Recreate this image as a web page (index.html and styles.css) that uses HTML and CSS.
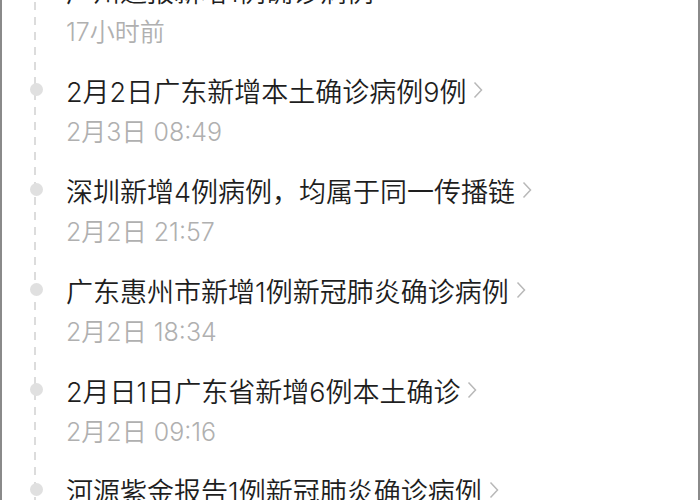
FILE: index.html
```html
<!DOCTYPE html>
<html lang="zh">
<head>
<meta charset="utf-8">
<link rel="stylesheet" href="styles.css">
</head>
<body>
<div class="frame">
  <ul class="timeline">
    <li class="item">
      <span class="dot"></span>
      <div class="body">
        <div class="title">广州通报新增1例确诊病例<svg class="chev" viewBox="0 0 10 18"><polyline points="1.5,1.5 8.5,9 1.5,16.5"/></svg></div>
        <div class="time">17小时前</div>
      </div>
    </li>
    <li class="item">
      <span class="dot"></span>
      <div class="body">
        <div class="title">2月2日广东新增本土确诊病例9例<svg class="chev" viewBox="0 0 10 18"><polyline points="1.5,1.5 8.5,9 1.5,16.5"/></svg></div>
        <div class="time">2月3日 08:49</div>
      </div>
    </li>
    <li class="item">
      <span class="dot"></span>
      <div class="body">
        <div class="title">深圳新增4例病例，均属于同一传播链<svg class="chev" viewBox="0 0 10 18"><polyline points="1.5,1.5 8.5,9 1.5,16.5"/></svg></div>
        <div class="time">2月2日 21:57</div>
      </div>
    </li>
    <li class="item">
      <span class="dot"></span>
      <div class="body">
        <div class="title">广东惠州市新增1例新冠肺炎确诊病例<svg class="chev" viewBox="0 0 10 18"><polyline points="1.5,1.5 8.5,9 1.5,16.5"/></svg></div>
        <div class="time">2月2日 18:34</div>
      </div>
    </li>
    <li class="item">
      <span class="dot"></span>
      <div class="body">
        <div class="title">2月日1日广东省新增6例本土确诊<svg class="chev" viewBox="0 0 10 18"><polyline points="1.5,1.5 8.5,9 1.5,16.5"/></svg></div>
        <div class="time">2月2日 09:16</div>
      </div>
    </li>
    <li class="item">
      <span class="dot"></span>
      <div class="body">
        <div class="title">河源紫金报告1例新冠肺炎确诊病例<svg class="chev" viewBox="0 0 10 18"><polyline points="1.5,1.5 8.5,9 1.5,16.5"/></svg></div>
        <div class="time">2月2日 08:00</div>
      </div>
    </li>
  </ul>
</div>
</body>
</html>
```
FILE: styles.css
```css
html, body {
  margin: 0;
  padding: 0;
  background: #ffffff;
}
.frame {
  height: 500px;
  overflow: hidden;
  box-sizing: border-box;
  border-left: 2px solid #8a8a8a;
  border-right: 2px solid #8a8a8a;
  font-family: Inter, "Noto Sans CJK SC", sans-serif;
}
.timeline {
  list-style: none;
  margin: -28px 0 0 0;
  padding: 0;
  background-image: linear-gradient(to bottom, #dcdcdc 0, #dcdcdc 8px, transparent 8px, transparent 15px);
  background-size: 2px 15px;
  background-repeat: repeat-y;
  background-position: 32px 0;
}
.item {
  display: flex;
  height: 100px;
}
.dot {
  flex: none;
  width: 13px;
  height: 13px;
  border-radius: 50%;
  background: #e0e0e0;
  margin: 11px 0 0 28px;
}
.body {
  margin-left: 23px;
}
.title {
  display: flex;
  align-items: center;
  height: 36px;
  font-size: 27px;
  font-weight: 350;
  color: #1e1e1e;
  white-space: nowrap;
}
.chev {
  width: 10px;
  height: 18px;
  margin-left: 7px;
  fill: none;
  stroke: #b8b8b8;
  stroke-width: 1.5;
}
.time {
  margin-top: 9px;
  height: 30px;
  line-height: 30px;
  font-size: 25px;
  font-weight: 350;
  color: #b0b0b0;
  white-space: nowrap;
}
```
